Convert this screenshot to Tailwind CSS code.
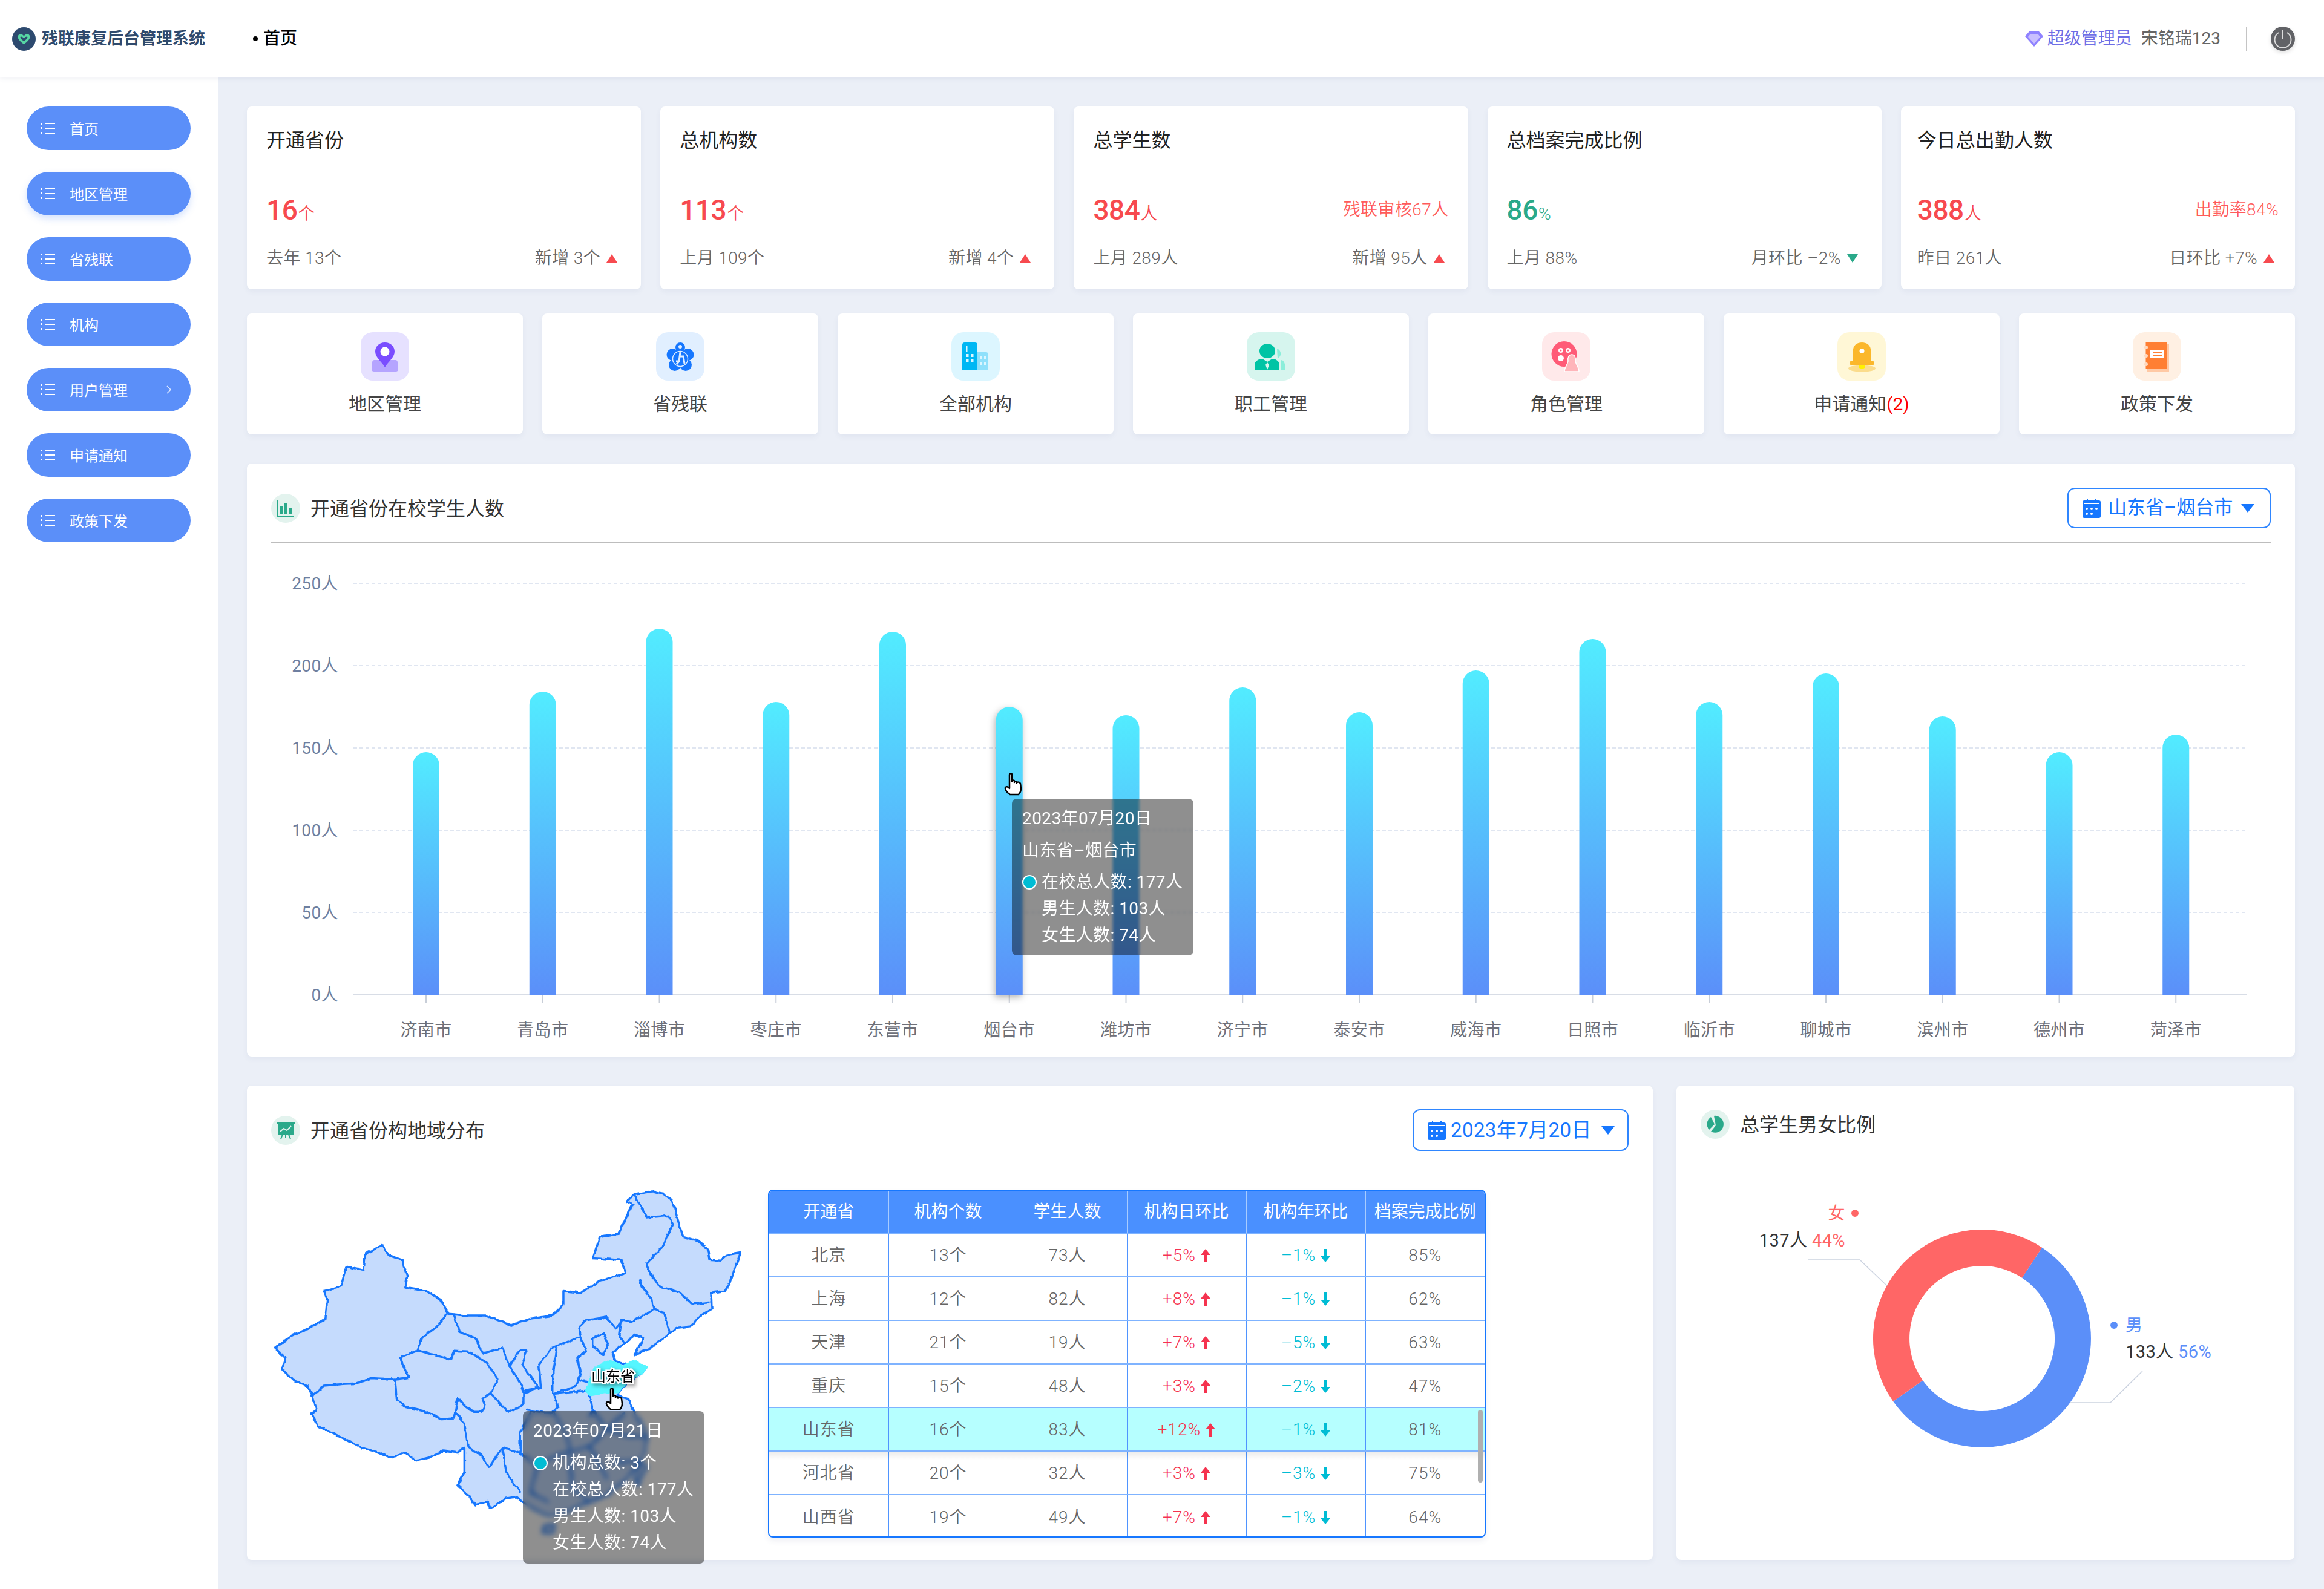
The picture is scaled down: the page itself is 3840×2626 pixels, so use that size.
<!DOCTYPE html>
<html lang="zh-CN">
<head>
<meta charset="UTF-8">
<title>残联康复后台管理系统</title>
<script src="https://cdn.jsdelivr.net/npm/@tailwindcss/browser@4"></script>
</head>
<body class="w-[3840px] h-[2626px] overflow-hidden bg-[#ebeff7] text-[28px] font-[350] tracking-[0.4px] text-[#666] [font-family:Roboto,'Noto_Sans_CJK_SC',sans-serif]">

<!-- top bar -->
<header class="relative z-10 h-[128px] bg-white flex items-center font-normal tracking-normal shadow-[0_2px_8px_rgba(60,80,130,0.08)]">
  <svg class="ml-[20px] w-[39px] h-[39px]" viewBox="0 0 40 40"><circle cx="20" cy="20" r="20" fill="#2d4a6f"/><path d="M20 29 C14 24 9 20 10 15 C11 11 16 10 20 15 C24 10 29 11 30 15 C31 20 26 24 20 29Z M20 19 C18 16 14 15 14 17 C14 20 18 22 20 24 C22 22 26 20 26 17 C26 15 22 16 20 19Z" fill="#57d6a4" fill-rule="evenodd"/></svg>
  <span class="ml-[10px] w-[270px] text-[27px] font-bold text-[#2f4a6d] whitespace-nowrap">残联康复后台管理系统</span>
  <span class="ml-[79px] w-[8px] h-[8px] rounded-full bg-black"></span>
  <span class="ml-[9px] text-[28px] font-medium text-black">首页</span>
  <div class="ml-auto flex items-center">
    <svg class="w-[30px] h-[26px]" viewBox="0 0 30 26"><path d="M7 1 H23 L30 9 L15 26 L0 9Z" fill="#8f82ff"/><path d="M9 5 H21 L25 10 L15 21 L5 10Z" fill="#c9bfff"/></svg>
    <span class="ml-[7px] text-[#6e6ee6]">超级管理员</span>
    <span class="ml-[15px] text-[#666]">宋铭瑞123</span>
    <span class="ml-[42px] w-[2px] h-[40px] bg-[#c4c4c4]"></span>
    <svg class="ml-[39px] mr-[48px] w-[40px] h-[40px] drop-shadow-md" viewBox="0 0 40 40"><circle cx="20" cy="20" r="20" fill="#616266"/><path d="M13 10 A13.5 13.5 0 1 0 27 10" fill="none" stroke="#ddd" stroke-width="2"/><path d="M20 5 V20" stroke="#ddd" stroke-width="2"/></svg>
  </div>
</header>

<div class="flex h-[2498px]">
  <!-- side menu -->
  <aside id="menu" class="w-[360px] bg-white pt-[48px] pl-[44px] flex flex-col gap-[36px]"></aside>

  <main class="flex-1 pt-[48px] pl-[48px] pr-[48px] flex flex-col">
    <!-- stat cards -->
    <section id="stats" class="grid grid-cols-5 gap-[32px] h-[302px]"></section>

    <!-- shortcuts -->
    <section class="grid grid-cols-7 gap-[32px] h-[200px] mt-[40px] tracking-normal font-normal">
      <div class="bg-white rounded-[8px] shadow-[0_4px_10px_rgba(60,80,130,0.06)] flex flex-col items-center pt-[31px]">
        <div class="w-[80px] h-[80px] rounded-[20px] bg-[#e6e1ff]"><svg viewBox="0 0 80 80"><path d="M22 46 H58 Q60 46 61 49 L62 61 Q62 65 58 65 H22 Q18 65 18 61 L19 49 Q20 46 22 46Z" fill="#b5a4ff"/><path d="M40 17 C30 17 24 24 24 32 C24 42 36 50 40 58 C44 50 56 42 56 32 C56 24 50 17 40 17Z" fill="#7a4dff"/><ellipse cx="40" cy="32" rx="7.5" ry="7.5" fill="#fff"/></svg></div>
        <span class="mt-[20px] text-[30px] leading-[38px] text-[#444]">地区管理</span>
      </div>
      <div class="bg-white rounded-[8px] shadow-[0_4px_10px_rgba(60,80,130,0.06)] flex flex-col items-center pt-[31px]">
        <div class="w-[80px] h-[80px] rounded-[20px] bg-[#e1efff]"><svg viewBox="0 0 80 80"><g fill="#1677ff"><circle cx="40" cy="25" r="8"/><circle cx="27.500" cy="37" r="10"/><circle cx="52.500" cy="37" r="10"/><circle cx="31" cy="54" r="10"/><circle cx="49" cy="54" r="10"/><circle cx="40" cy="42" r="12"/></g><circle cx="40" cy="24" r="3" fill="#e1efff"/><circle cx="40" cy="44" r="12.500" fill="none" stroke="#e1efff" stroke-width="1.500"/><path d="M40 33 L38 48 H33 M40 40 H45 L47 52 M38 48 L34 53" fill="none" stroke="#e1efff" stroke-width="3"/></svg></div>
        <span class="mt-[20px] text-[30px] leading-[38px] text-[#444]">省残联</span>
      </div>
      <div class="bg-white rounded-[8px] shadow-[0_4px_10px_rgba(60,80,130,0.06)] flex flex-col items-center pt-[31px]">
        <div class="w-[80px] h-[80px] rounded-[20px] bg-[#dcf6ff]"><svg viewBox="0 0 80 80"><path d="M43 33 H57 Q61 33 61 37 V62 H43Z" fill="#8fe0fb"/><path d="M18 62 V21 Q18 17 22 17 H39 Q43 17 43 21 V62Z" fill="#00b7f4"/><g fill="#dcf6ff"><rect x="24" y="23" width="2.500" height="9"/><rect x="24" y="36" width="4.500" height="5"/><rect x="32" y="36" width="4.500" height="5"/><rect x="24" y="45" width="4.500" height="5"/><rect x="32" y="45" width="4.500" height="5"/><rect x="47" y="40" width="4" height="5"/><rect x="54" y="40" width="4" height="5"/><rect x="47" y="49" width="4" height="5"/><rect x="54" y="49" width="4" height="5"/></g></svg></div>
        <span class="mt-[20px] text-[30px] leading-[38px] text-[#444]">全部机构</span>
      </div>
      <div class="bg-white rounded-[8px] shadow-[0_4px_10px_rgba(60,80,130,0.06)] flex flex-col items-center pt-[31px]">
        <div class="w-[80px] h-[80px] rounded-[20px] bg-[#d6f5ee]"><svg viewBox="0 0 80 80"><path d="M50 27 C57 29 59 40 51 43Z M56 46 C61 46 64 50 64 63 H56Z" fill="#8aeeda"/><ellipse cx="34" cy="31" rx="13" ry="12" fill="#00c4a5"/><path d="M13 63 V54 C13 47 21 44 26 44 L34 49 L42 44 C47 44 54 47 54 54 V63Z" fill="#00c4a5"/><path d="M34 50 L37 54 L34 62 L31 54Z" fill="#d6f5ee"/></svg></div>
        <span class="mt-[20px] text-[30px] leading-[38px] text-[#444]">职工管理</span>
      </div>
      <div class="bg-white rounded-[8px] shadow-[0_4px_10px_rgba(60,80,130,0.06)] flex flex-col items-center pt-[31px]">
        <div class="w-[80px] h-[80px] rounded-[20px] bg-[#ffe9ea]"><svg viewBox="0 0 80 80"><circle cx="36.500" cy="36" r="21" fill="#ff5b77"/><g fill="#fff"><circle cx="31" cy="30" r="4"/><circle cx="43" cy="30" r="4"/><circle cx="31" cy="43" r="5"/></g><g fill="#ff5b77"><circle cx="31" cy="30" r="1.500"/><circle cx="43" cy="30" r="1.500"/></g><path d="M49 37 C54 37 56 42 55 48 C56 54 61 58 61 65 H37 C37 58 42 54 43 48 C42 42 44 37 49 37Z" fill="#ffb5ba" stroke="#fff" stroke-width="1.500"/></svg></div>
        <span class="mt-[20px] text-[30px] leading-[38px] text-[#444]">角色管理</span>
      </div>
      <div class="bg-white rounded-[8px] shadow-[0_4px_10px_rgba(60,80,130,0.06)] flex flex-col items-center pt-[31px]">
        <div class="w-[80px] h-[80px] rounded-[20px] bg-[#fff7d6]"><svg viewBox="0 0 80 80"><ellipse cx="40.500" cy="60" rx="22.500" ry="5.500" fill="#fbdc8c"/><rect x="35" y="52" width="11" height="8" rx="4" fill="#fff000"/><path d="M25.500 49 V32 C25.500 22 32 17 40.500 17 C49 17 55.500 22 55.500 32 V49Z" fill="#fbb72b"/><rect x="20" y="48" width="41" height="6" rx="2" fill="#fbb72b"/><ellipse cx="40.500" cy="31" rx="4" ry="4" fill="#fff"/></svg></div>
        <span class="mt-[20px] text-[30px] leading-[38px] text-[#444]">申请通知<span class="text-[#f00]">(2)</span></span>
      </div>
      <div class="bg-white rounded-[8px] shadow-[0_4px_10px_rgba(60,80,130,0.06)] flex flex-col items-center pt-[31px]">
        <div class="w-[80px] h-[80px] rounded-[20px] bg-[#fff0e3]"><svg viewBox="0 0 80 80"><rect x="24" y="20" width="36" height="45" fill="#ffc9a5"/><rect x="21.500" y="17" width="35" height="43" fill="#ff7f33"/><g fill="#ffd9bf"><circle cx="22" cy="25" r="3"/><circle cx="22" cy="39" r="3"/><circle cx="22" cy="53" r="3"/></g><rect x="29" y="29" width="23" height="14" fill="#fff"/><rect x="33" y="32.500" width="15" height="2" fill="#ff7f33"/><rect x="33" y="37.500" width="15" height="2" fill="#ff7f33"/></svg></div>
        <span class="mt-[20px] text-[30px] leading-[38px] text-[#444]">政策下发</span>
      </div>
    </section>

    <!-- bar chart -->
    <section class="relative mt-[48px] h-[980px] bg-white rounded-[8px] shadow-[0_4px_10px_rgba(60,80,130,0.06)]">
      <div class="mx-[40px] h-[131px] pt-[17px] flex items-center border-b border-[#bdbdbd]">
        <svg class="w-[48px] h-[48px]" viewBox="0 0 48 48"><circle cx="24" cy="24" r="24" fill="#e3f3ee"/><path d="M11 11 V37 H38" fill="none" stroke="#2aa98a" stroke-width="2"/><g fill="#2aa98a"><rect x="15" y="20" width="5" height="14"/><rect x="22" y="15" width="5" height="19"/><rect x="29" y="23" width="5" height="11"/></g></svg>
        <h2 class="ml-[17px] pt-[3px] text-[32px] tracking-normal text-[#333] font-normal">开通省份在校学生人数</h2>
        <button class="ml-auto w-[336px] h-[67px] rounded-[12px] border-2 border-[#2f86ff] text-[#1677ff] text-[31px] tracking-normal font-normal flex items-center pl-[23px]">
          <svg class="w-[30px] h-[32px] mr-[12px]" viewBox="0 0 30 32"><rect y="3" width="30" height="29" rx="3" fill="#1677ff"/><rect x="7" y="0" width="2" height="7" fill="#1677ff"/><rect x="21" y="0" width="2" height="7" fill="#1677ff"/><rect x="2" y="7" width="26" height="2" fill="#fff"/><g fill="#fff"><circle cx="7" cy="17" r="2"/><circle cx="15" cy="17" r="2"/><circle cx="23" cy="17" r="2"/><circle cx="7" cy="25" r="2"/><circle cx="15" cy="25" r="2"/></g></svg>
          山东省–烟台市
          <svg class="ml-[14px] w-[22px] h-[14px]" viewBox="0 0 22 14"><path d="M0 0 H22 L11 14Z" fill="#1677ff"/></svg>
        </button>
      </div>
      <svg id="barChart" class="block w-[3384px] h-[849px] font-normal" viewBox="408 897 3384 849"></svg>
      <!-- tooltip over the bars -->
      <div class="absolute left-[1264px] top-[554px] w-[300px] h-[259px] rounded-[8px] bg-black/44 backdrop-blur-[2px] text-white font-normal pl-[17px] pt-[11px] leading-[44px]">
        <div>2023年07月20日</div>
        <div class="mt-[9px]">山东省–烟台市</div>
        <div class="mt-[8px] flex items-center"><span class="w-[24px] h-[24px] rounded-full bg-[#00bcd4] border-2 border-white mr-[8px]"></span>在校总人数: 177人</div>
        <div class="pl-[32px]">男生人数: 103人</div>
        <div class="pl-[32px]">女生人数: 74人</div>
      </div>
      <svg class="absolute left-[1251px] top-[511px] w-[30px] h-[38px]" viewBox="0 0 30 38"><path d="M9 3 C9 0.500 13 0.500 13 3 V14 C13 12 17 12 17 14 V16 C17 14 21 14 21 16 V17 C21 15 26 15 27 18 L28 26 C28 31 26 34 24 36 H10 C7 35 1 28 2 25 C3 22 7 23 9 26Z" fill="#fff" stroke="#000" stroke-width="2.500" stroke-linejoin="round"/></svg>
    </section>

    <!-- bottom row -->
    <section class="mt-[48px] h-[784px] flex gap-[39px]">
      <div class="relative w-[2323px] bg-white rounded-[8px] shadow-[0_4px_10px_rgba(60,80,130,0.06)]">
        <div class="mx-[40px] h-[132px] pt-[16px] flex items-center border-b border-[#bdbdbd]">
          <svg class="w-[48px] h-[48px]" viewBox="0 0 48 48"><circle cx="24" cy="24" r="24" fill="#e3f3ee"/><path d="M11 12 H37 V31 H11Z" fill="#2aa98a"/><path d="M9 12 H39 M19 31 L16 38 M29 31 L32 38 M24 31 V36" stroke="#2aa98a" stroke-width="2"/><path d="M15 26 L21 21 L26 24 L33 17" fill="none" stroke="#e3f3ee" stroke-width="2"/></svg>
          <h2 class="ml-[17px] pt-[3px] text-[32px] tracking-normal text-[#333] font-normal">开通省份构地域分布</h2>
          <button class="ml-auto w-[357px] h-[69px] rounded-[12px] border-2 border-[#2f86ff] text-[#1677ff] text-[33px] font-normal flex items-center pl-[23px]">
            <svg class="w-[30px] h-[32px] mr-[8px]" viewBox="0 0 30 32"><rect y="3" width="30" height="29" rx="3" fill="#1677ff"/><rect x="7" y="0" width="2" height="7" fill="#1677ff"/><rect x="21" y="0" width="2" height="7" fill="#1677ff"/><rect x="2" y="7" width="26" height="2" fill="#fff"/><g fill="#fff"><circle cx="7" cy="17" r="2"/><circle cx="15" cy="17" r="2"/><circle cx="23" cy="17" r="2"/><circle cx="7" cy="25" r="2"/><circle cx="15" cy="25" r="2"/></g></svg>
            2023年7月20日
            <svg class="ml-[16px] w-[22px] h-[14px]" viewBox="0 0 22 14"><path d="M0 0 H22 L11 14Z" fill="#1677ff"/></svg>
          </button>
        </div>
        <div class="flex pl-[40px] pt-[40px]">
          <!-- map of China, drawn in zoom coordinates -->
          <svg class="absolute left-0 top-[133px] w-[900px] h-[651px] overflow-visible" viewBox="408 1927 900 651">
            <defs>
              <filter id="rough" filterUnits="userSpaceOnUse" x="408" y="1927" width="900" height="651">
                <feTurbulence type="fractalNoise" baseFrequency="0.09" numOctaves="2" seed="4"/>
                <feDisplacementMap in="SourceGraphic" scale="5" xChannelSelector="R" yChannelSelector="G"/>
              </filter>
            </defs>
            <g filter="url(#rough)">
            <g transform="translate(400 1780) scale(0.574 0.5397)" fill="none" stroke="#1677ff" stroke-width="3.500" stroke-linejoin="round" stroke-linecap="round">
              <path fill="#c5dbfd" vector-effect="non-scaling-stroke" d="M1108 380 L1130 358 L1180 350 L1210 356 L1232 372 L1245 400 L1255 440 L1270 490 L1310 500 L1340 525 L1345 560 L1375 562 L1395 545 L1435 538 L1420 580 L1405 630 L1390 655 L1350 660 L1352 710 L1320 730 L1290 765 L1250 770 L1225 790 L1200 810 L1175 830 L1130 850 L1155 800 L1130 790 L1100 815 L1065 845 L1075 870 L1115 880 L1165 890 L1150 908 L1110 935 L1080 975 L1110 985 L1130 1030 L1150 1060 L1165 1100 L1160 1150 L1130 1200 L1100 1240 L1050 1280 L1000 1300 L940 1330 L880 1345 L820 1310 L790 1285 L760 1290 L715 1320 L705 1300 L670 1310 L655 1285 L620 1250 L640 1210 L640 1135 L620 1150 L580 1145 L540 1165 L500 1175 L470 1150 L430 1165 L395 1150 L345 1135 L300 1110 L260 1090 L220 1070 L200 1030 L215 1020 L205 985 L190 945 L150 930 L115 895 L125 860 L95 830 L140 795 L190 770 L240 740 L245 680 L235 655 L285 640 L300 580 L350 590 L355 540 L405 515 L420 545 L460 560 L475 610 L470 645 L530 655 L570 680 L595 725 L640 730 L700 730 L775 760 L830 740 L895 730 L925 695 L925 655 L975 660 L1030 625 L1105 600 L1090 560 L1010 555 L1030 490 L1085 480 L1110 420 L1125 390Z"/>
              <path fill="#c5dbfd" vector-effect="non-scaling-stroke" d="M870 1375 L900 1370 L895 1395 L865 1395Z"/>
              <path fill="#c5dbfd" vector-effect="non-scaling-stroke" d="M1145 1180 L1165 1190 L1140 1250 L1130 1230Z"/>
              <path vector-effect="non-scaling-stroke" d="M205 975 L235 945 L290 940 L330 938 L370 922 L440 925 L480 920 L462 880 L455 858 L505 838 L520 795 L565 760 L590 725"/>
              <path vector-effect="non-scaling-stroke" d="M440 925 L445 985 L470 1010 L530 1025 L575 1048 L610 1045 L620 985 L640 1005 L665 1025 L690 1025 L700 1005 L690 985 L715 970 L735 925 L705 875 L650 840 L610 838 L600 865 L550 850 L510 838"/>
              <path vector-effect="non-scaling-stroke" d="M608 727 L625 780 L670 800 L695 845 L750 830 L770 885 L800 935 L810 960 L810 1000 L780 1022 L760 1020 L730 985 L715 970"/>
              <path vector-effect="non-scaling-stroke" d="M770 885 L800 835 L820 835 L805 880 L850 945 L855 950 L815 960"/>
              <path vector-effect="non-scaling-stroke" d="M855 880 L890 830 L975 795 L970 765 L990 745 L1050 735 L1075 770 L1095 745 L1120 750 L1185 712 L1180 680 L1150 640 L1145 622"/>
              <path vector-effect="non-scaling-stroke" d="M975 795 L990 840 L965 860 L975 915 L965 925 L1000 935"/>
              <path vector-effect="non-scaling-stroke" d="M1010 800 L1040 785 L1055 815 L1040 850 L1010 825Z"/>
              <path vector-effect="non-scaling-stroke" d="M1090 745 L1085 790 L1100 815 M1185 712 L1215 720 L1232 785"/>
              <path vector-effect="non-scaling-stroke" d="M1165 575 L1180 610 L1200 640 L1260 660 L1295 695 L1345 690 M1130 362 L1165 430 L1225 425 L1240 450 L1210 520 L1165 570"/>
              <path vector-effect="non-scaling-stroke" d="M905 830 L895 900 L895 970 L960 945 L975 915 M855 885 L860 950 L815 965 M895 970 L910 1010 L890 1030 L820 1020"/>
              <path vector-effect="non-scaling-stroke" d="M612 1025 L640 1060 L650 1130 L690 1160 L712 1195 L750 1135 L800 1150 L800 1090 L830 1030"/>
              <path vector-effect="non-scaling-stroke" d="M895 970 L995 960 M1000 975 L1010 1020 L1000 1040"/>
              <path vector-effect="non-scaling-stroke" d="M800 1150 L850 1190 L900 1160 L1000 1130 L1100 1030 M750 1135 L760 1210 L800 1270 M850 1190 L830 1270 L880 1300 M940 1110 L950 1260 L1000 1300 M1000 1130 L1050 1230 M1010 1020 L1050 1080 L1110 1100 L1165 1100 M1050 1080 L1000 1130 M900 1030 L940 1110 M1070 1180 L1140 1175"/>
              <path fill="#55f6ff" vector-effect="non-scaling-stroke" stroke="#55f6ff" d="M990 960 L1015 890 L1060 868 L1095 885 L1130 870 L1165 890 L1150 908 L1110 930 L1085 965 L1040 965 L1005 972Z"/>
            </g>
            </g>
            <text x="1013" y="2283" text-anchor="middle" font-size="24" font-weight="400" letter-spacing="0" fill="#000" stroke="#fff" stroke-width="5" paint-order="stroke" class="[filter:drop-shadow(3px_3px_3px_rgba(0,0,0,0.4))]">山东省</text>
          </svg>
          <svg class="absolute left-[592px] top-[499px] w-[30px] h-[39px]" viewBox="0 0 30 38"><path d="M9 3 C9 0.500 13 0.500 13 3 V14 C13 12 17 12 17 14 V16 C17 14 21 14 21 16 V17 C21 15 26 15 27 18 L28 26 C28 31 26 34 24 36 H10 C7 35 1 28 2 25 C3 22 7 23 9 26Z" fill="#fff" stroke="#000" stroke-width="2.500" stroke-linejoin="round"/></svg>
          <div class="absolute z-10 left-[456px] top-[538px] w-[300px] h-[252px] rounded-[8px] bg-black/44 backdrop-blur-[4px] text-white font-normal pl-[17px] pt-[11px] leading-[44px]">
            <div>2023年07月21日</div>
            <div class="mt-[9px] flex items-center"><span class="w-[24px] h-[24px] rounded-full bg-[#00bcd4] border-2 border-white mr-[8px]"></span>机构总数: 3个</div>
            <div class="pl-[32px]">在校总人数: 177人</div>
            <div class="pl-[32px]">男生人数: 103人</div>
            <div class="pl-[32px]">女生人数: 74人</div>
          </div>

          <!-- province table -->
          <div class="relative ml-[821px] w-[1186px] h-[575px] rounded-[8px] border-2 border-[#1677ff] overflow-hidden shadow-[0_6px_10px_rgba(60,80,130,0.08)]">
            <table class="w-full table-fixed border-collapse text-center">
              <thead>
                <tr class="h-[70px] bg-[#4a90ff] text-white tracking-normal border-b-2 border-[#7fb3ff]">
                  <th class="font-normal border-r border-[#a8ccff]">开通省</th>
                  <th class="font-normal border-r border-[#a8ccff]">机构个数</th>
                  <th class="font-normal border-r border-[#a8ccff]">学生人数</th>
                  <th class="font-normal border-r border-[#a8ccff]">机构日环比</th>
                  <th class="font-normal border-r border-[#a8ccff]">机构年环比</th>
                  <th class="font-normal">档案完成比例</th>
                </tr>
              </thead>
              <tbody id="provinceRows"></tbody>
            </table>
            <div class="absolute left-0 right-0 top-[431px] h-[14px] bg-gradient-to-b from-black/8 to-transparent"></div>
            <div class="absolute left-[1171px] top-[362px] w-[8px] h-[120px] rounded-full bg-[#b0b0b0]"></div>
          </div>
        </div>
      </div>

      <div class="w-[1021px] bg-white rounded-[8px] shadow-[0_4px_10px_rgba(60,80,130,0.06)]">
        <div class="mx-[40px] h-[112px] pt-[16px] flex items-center border-b border-[#bdbdbd]">
          <svg class="w-[48px] h-[48px]" viewBox="0 0 48 48"><circle cx="24" cy="24" r="24" fill="#e3f3ee"/><path d="M22 10 A14 14 0 1 1 17 36 L25 26Z M17 12 L23 24 L14 33 A14 14 0 0 1 17 12Z" fill="#2aa98a"/></svg>
          <h2 class="ml-[17px] pt-[3px] text-[32px] tracking-normal text-[#333] font-normal">总学生男女比例</h2>
        </div>
        <svg class="block w-[1021px] h-[672px] font-normal" viewBox="2770 1906 1021 672">
          <path d="M3374.1 2061.7 A180 180 0 1 1 3128.1 2316 L3177.1 2281.300 A120 120 0 1 0 3341.1 2111.800Z" fill="#5b8ff9"/>
          <path d="M3128.1 2316 A180 180 0 0 1 3374.1 2061.7 L3341.1 2111.800 A120 120 0 0 0 3177.1 2281.300Z" fill="#ff6666"/>
          <path d="M2987 2082 H3073 L3118 2125" fill="none" stroke="#ccd3e0" stroke-width="1.500"/>
          <path d="M3421 2318 H3487 L3540 2266" fill="none" stroke="#ccd3e0" stroke-width="1.500"/>
          <text x="3049" y="2015" text-anchor="end" font-size="28" fill="#ff6666">女</text>
          <circle cx="3065" cy="2005" r="6" fill="#ff6666"/>
          <text x="3049" y="2060" text-anchor="end" font-size="29" fill="#333">137人 <tspan fill="#ff6666">44%</tspan></text>
          <circle cx="3493" cy="2190" r="6" fill="#5b8ff9"/>
          <text x="3512" y="2200" font-size="28" fill="#5b8ff9">男</text>
          <text x="3512" y="2244" font-size="29" fill="#333">133人 <tspan fill="#5b8ff9">56%</tspan></text>
        </svg>
      </div>
    </section>
  </main>
</div>

<script>
// side menu
const menuItems = ["首页", "地区管理", "省残联", "机构", "用户管理", "申请通知", "政策下发"];
document.getElementById("menu").innerHTML = menuItems.map((name, i) => `
  <div class="w-[271px] h-[72px] rounded-full bg-[#5b8ff9] text-white text-[24px] tracking-normal font-normal flex items-center pl-[23px] ${i === 1 ? "shadow-[0_6px_12px_rgba(91,143,249,0.25)]" : ""}">
    <svg class="w-[24px] h-[18px] mr-[24px]" viewBox="0 0 24 18"><g fill="#fff"><rect x="0" y="0" width="3" height="3"/><rect x="0" y="7" width="3" height="3"/><rect x="0" y="15" width="3" height="3"/><rect x="7" y="0" width="17" height="2"/><rect x="7" y="8" width="17" height="2"/><rect x="7" y="16" width="17" height="2"/></g></svg>
    <span class="pt-[3px]">${name}</span>
    ${name === "用户管理" ? '<svg class="ml-[63px] w-[10px] h-[16px]" viewBox="0 0 10 16"><path d="M2 2 L8 8 L2 14" fill="none" stroke="#dfe9ff" stroke-width="1.500"/></svg>' : ""}
  </div>`).join("");

// stat cards
const up = '<svg class="ml-[10px] w-[18px] h-[14px]" viewBox="0 0 18 14"><path d="M9 0 L18 14 H0Z" fill="#f74a4f"/></svg>';
const down = '<svg class="ml-[10px] w-[18px] h-[14px]" viewBox="0 0 18 14"><path d="M0 0 H18 L9 14Z" fill="#2aa98a"/></svg>';
const stats = [
  { title: "开通省份", num: "16", unit: "个", prev: "去年 13个", change: "新增 3个", arrow: up },
  { title: "总机构数", num: "113", unit: "个", prev: "上月 109个", change: "新增 4个", arrow: up },
  { title: "总学生数", num: "384", unit: "人", side: "残联审核67人", prev: "上月 289人", change: "新增 95人", arrow: up },
  { title: "总档案完成比例", num: "86", unit: "%", green: true, prev: "上月 88%", change: "月环比 –2%", arrow: down },
  { title: "今日总出勤人数", num: "388", unit: "人", side: "出勤率84%", prev: "昨日 261人", change: "日环比 +7%", arrow: up, last: true }
];
document.getElementById("stats").innerHTML = stats.map(s => `
  <div class="bg-white rounded-[8px] shadow-[0_4px_10px_rgba(60,80,130,0.06)] ${s.last ? "px-[27px]" : "px-[32px]"}">
    <div class="h-[107px] pt-[36px] text-[32px] leading-[40px] tracking-normal font-normal text-[#222] border-b border-[#e0e0e0]">${s.title}</div>
    <div class="mt-[41px] h-[46px] flex items-center justify-between ${s.green ? "text-[#2aa98a]" : "text-[#f74a4f]"}">
      <span class="flex items-baseline"><span class="text-[46px] leading-none font-medium tracking-[-0.5px]">${s.num}</span><span class="text-[28px] ml-[1px] leading-none">${s.unit}</span></span>
      ${s.side ? `<span class="text-[28px] text-[#ff5b5b]">${s.side}</span>` : ""}
    </div>
    <div class="mt-[38px] h-[38px] flex items-center justify-between">
      <span>${s.prev}</span>
      <span class="flex items-center pr-[7px]">${s.change}${s.arrow}</span>
    </div>
  </div>`).join("");

// bar chart, in page coordinates
const cities = ["济南市","青岛市","淄博市","枣庄市","东营市","烟台市","潍坊市","济宁市","泰安市","威海市","日照市","临沂市","聊城市","滨州市","德州市","菏泽市"];
const barTops = [1243,1143,1039,1160,1044,1168,1182,1136,1177,1108,1056,1160,1113,1184,1243,1214];
let chart = `<defs><linearGradient id="barFill" x1="0" y1="0" x2="0" y2="1"><stop offset="0" stop-color="#52ecff"/><stop offset="1" stop-color="#5b8ff9"/></linearGradient></defs>`;
["250人","200人","150人","100人","50人","0人"].forEach((label, i) => {
  const y = 964 + i * 136;
  chart += `<text x="559" y="${y + 10}" text-anchor="end" font-size="28" fill="#6e7fa0">${label}</text>`;
  chart += i < 5
    ? `<line x1="584" x2="3712" y1="${y}" y2="${y}" stroke="#e0e6f1" stroke-width="2" stroke-dasharray="6 4"/>`
    : `<line x1="584" x2="3712" y1="${y}" y2="${y}" stroke="#d8dde6" stroke-width="2"/>`;
});
cities.forEach((city, i) => {
  const x = 704 + i * 192.75;
  const top = barTops[i];
  const hovered = city === "烟台市";
  chart += `<line x1="${x}" x2="${x}" y1="1644" y2="1657" stroke="#c8ced8" stroke-width="2"/>`;
  chart += `<path d="M${x - 22} 1644 V${top + 22} A22 22 0 0 1 ${x + 22} ${top + 22} V1644Z" fill="url(#barFill)" ${hovered ? 'class="[filter:drop-shadow(-2px_4px_6px_rgba(0,0,0,0.3))]"' : ""}/>`;
  chart += `<text x="${x}" y="1712" text-anchor="middle" font-size="28" fill="#6e7079">${city}</text>`;
});
document.getElementById("barChart").innerHTML = chart;

// province table
const provinces = [
  ["北京","13个","73人","+5%","–1%","85%"],
  ["上海","12个","82人","+8%","–1%","62%"],
  ["天津","21个","19人","+7%","–5%","63%"],
  ["重庆","15个","48人","+3%","–2%","47%"],
  ["山东省","16个","83人","+12%","–1%","81%"],
  ["河北省","20个","32人","+3%","–3%","75%"],
  ["山西省","19个","49人","+7%","–1%","64%"]
];
const arrowUp = '<svg class="inline-block ml-[8px] w-[16px] h-[22px] align-[-2px]" viewBox="0 0 16 22"><path d="M8 0 L16 10 H11 V22 H5 V10 H0Z" fill="#f5334f"/></svg>';
const arrowDown = '<svg class="inline-block ml-[8px] w-[16px] h-[22px] align-[-2px]" viewBox="0 0 16 22"><path d="M8 22 L16 12 H11 V0 H5 V12 H0Z" fill="#00bcd4"/></svg>';
document.getElementById("provinceRows").innerHTML = provinces.map((p, i) => `
  <tr class="h-[72px] tracking-[1px] border-b-2 border-[#7fb3ff] last:border-b-0 ${i === 4 ? "bg-[#b6ffff]" : ""}">
    <td class="pt-[2px] border-r border-[#4f94ff]">${p[0]}</td>
    <td class="pt-[2px] border-r border-[#4f94ff]">${p[1]}</td>
    <td class="pt-[2px] border-r border-[#4f94ff]">${p[2]}</td>
    <td class="pt-[2px] border-r border-[#4f94ff] text-[#f5334f]">${p[3]}${arrowUp}</td>
    <td class="pt-[2px] border-r border-[#4f94ff] text-[#00bcd4]">${p[4]}${arrowDown}</td>
    <td class="pt-[2px]">${p[5]}</td>
  </tr>`).join("");
</script>
</body>
</html>
